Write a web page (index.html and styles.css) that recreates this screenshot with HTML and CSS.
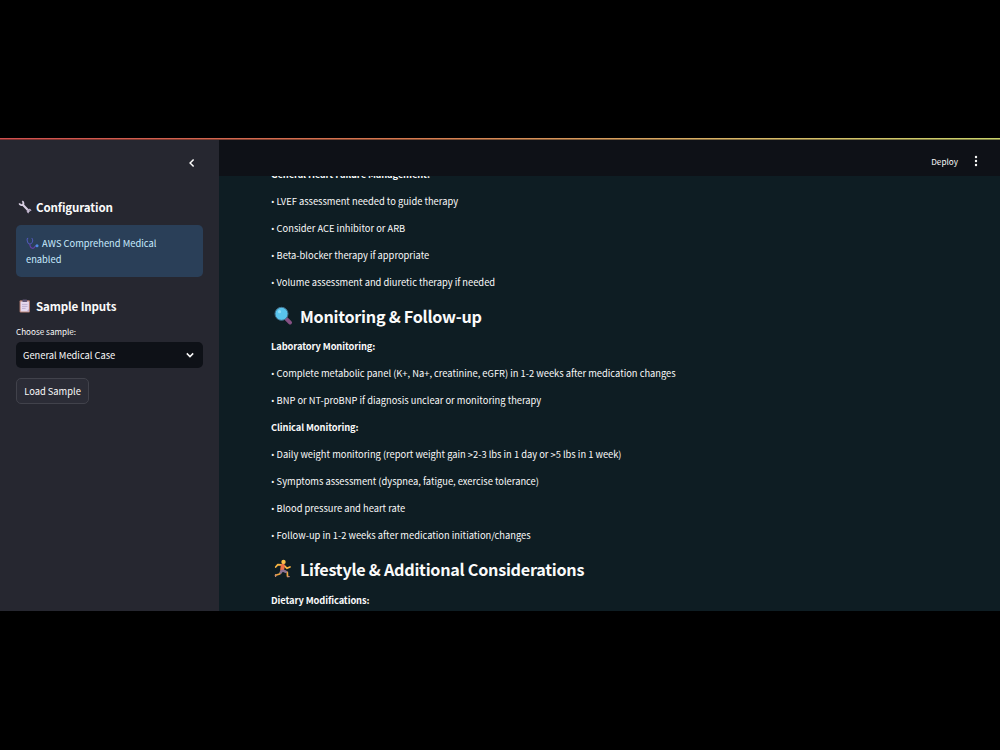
FILE: index.html
```
<!DOCTYPE html>
<html lang="en">
<head>
    <meta charset="UTF-8">
    <meta name="viewport" content="width=device-width, initial-scale=1.0">
    <title>Medical Assistant</title>
    <link rel="stylesheet" href="styles.css">
</head>
<body>
    <div class="app">
        <div class="decoration"></div>
        <aside class="sidebar">
            <div class="sidebar-header">
                <svg class="collapse" viewBox="0 0 10 10"><path d="M6.6 1.5 3.1 5l3.5 3.5"/></svg>
            </div>
            <h3>
                <svg class="icon" viewBox="0 0 14 14">
                    <path d="M4.6 4.6 10.8 11" stroke="#d8cfe2" stroke-width="2.1" stroke-linecap="round"/>
                    <path d="M1.3 3.4c.6 1.7 2.3 2.3 3.6 1.4 1-.9.9-2.6-.7-3.6" fill="none" stroke="#d8cfe2" stroke-width="1.7"/>
                    <path d="M9.4 11.8c-.2-1.6 1.2-2.8 2.9-2.2M10.7 12.9l-1.3-1.1M13 10.8l-.9-1.3" fill="none" stroke="#b9adc6" stroke-width="1.3"/>
                </svg>
                <span>Configuration</span>
            </h3>
            <div class="alert">
                <svg class="icon-small" viewBox="0 0 13 13">
                    <path d="M2.2 1.2C1 1.2 1 2.7 1.3 4c.4 2 1.3 3 2.5 3S6.6 5.5 6.7 3.5c0-1.4-.2-2.3-1.2-2.3" fill="none" stroke="#4f58b5" stroke-width="1.1"/>
                    <path d="M3.8 7c.2 3 1.2 4.3 3.2 4.3 2.2 0 1.5-2.8 3.5-2.8" fill="none" stroke="#6440a4" stroke-width="1.2"/>
                    <circle cx="11" cy="8.8" r="1.5" fill="#4d8be6"/>
                </svg>
                <span>AWS Comprehend Medical enabled</span>
            </div>
            <h3 class="samples-title">
                <svg class="icon" viewBox="0 0 14 14">
                    <rect x="1.6" y="1.2" width="10.3" height="12.3" rx="1" fill="#b98275"/>
                    <rect x="2.6" y="2.5" width="8.3" height="10" fill="#e6d9ee"/>
                    <rect x="4.4" y=".6" width="4.7" height="2.3" rx=".6" fill="#5f5573"/>
                    <path d="M4 5.4h5.5M4 7.4h5.5M4 9.4h3.6" stroke="#b5a6c9" stroke-width=".8"/>
                    <path d="m8.6 12.5 2.3-2.5v2.5z" fill="#b7a5c5"/>
                </svg>
                <span>Sample Inputs</span>
            </h3>
            <label class="field-label">Choose sample:</label>
            <div class="select">
                <span>General Medical Case</span>
                <svg class="chevron" viewBox="0 0 10 10"><path d="M1.8 3.4 5 6.6l3.2-3.2"/></svg>
            </div>
            <button class="load-btn">Load Sample</button>
        </aside>
        <main class="main">
            <header class="toolbar">
                <span class="deploy">Deploy</span>
                <svg class="dots" viewBox="0 0 4 12"><circle cx="2" cy="2" r="1.2"/><circle cx="2" cy="6" r="1.2"/><circle cx="2" cy="10" r="1.2"/></svg>
            </header>
            <div class="content">
                <p><strong>General Heart Failure Management:</strong></p>
                <p><span class="bullet">•</span> LVEF assessment needed to guide therapy</p>
                <p><span class="bullet">•</span> Consider ACE inhibitor or ARB</p>
                <p><span class="bullet">•</span> Beta-blocker therapy if appropriate</p>
                <p><span class="bullet">•</span> Volume assessment and diuretic therapy if needed</p>
                <h2>
                    <svg class="icon-large" viewBox="0 0 20 20">
                        <path d="m13.3 12.8 3.8 3.8" stroke="#865184" stroke-width="3.8" stroke-linecap="round"/>
                        <circle cx="8.5" cy="7.8" r="6.5" fill="#59c4ed" stroke="#42708c" stroke-width="1"/>
                        <circle cx="6.5" cy="5.7" r="1.6" fill="#8bdcf6"/>
                    </svg>
                    <span>Monitoring &amp; Follow-up</span>
                </h2>
                <p><strong>Laboratory Monitoring:</strong></p>
                <p><span class="bullet">•</span> Complete metabolic panel (K+, Na+, creatinine, eGFR) in 1-2 weeks after medication changes</p>
                <p><span class="bullet">•</span> BNP or NT-proBNP if diagnosis unclear or monitoring therapy</p>
                <p><strong>Clinical Monitoring:</strong></p>
                <p><span class="bullet">•</span> Daily weight monitoring (report weight gain &gt;2-3 lbs in 1 day or &gt;5 lbs in 1 week)</p>
                <p><span class="bullet">•</span> Symptoms assessment (dyspnea, fatigue, exercise tolerance)</p>
                <p><span class="bullet">•</span> Blood pressure and heart rate</p>
                <p><span class="bullet">•</span> Follow-up in 1-2 weeks after medication initiation/changes</p>
                <h2>
                    <svg class="icon-large" viewBox="0 0 20 20">
                        <g fill="none" stroke-linecap="round" stroke-linejoin="round">
                            <path d="M8.5 5.8 4.8 5.6 2.7 8M11.5 7l2.5 2.3 3-1.4" stroke="#f7b544" stroke-width="1.7"/>
                            <path d="M8.5 12.5 6.7 15l-4.2 1.3M11 12l3.3 1.3.2 4" stroke="#f0a63d" stroke-width="1.7"/>
                            <path d="m9.8 6.5-.6 4.3" stroke="#ed7046" stroke-width="4"/>
                            <path d="m8.7 12-1 1.5M10 11.7l3 1.2" stroke="#8c7192" stroke-width="2.5"/>
                            <path d="M2.6 15.6v1.8M14.5 17.6h1.7" stroke="#c78a78" stroke-width="1.3"/>
                        </g>
                        <circle cx="10.5" cy="2.9" r="2.2" fill="#fbc149"/>
                    </svg>
                    <span>Lifestyle &amp; Additional Considerations</span>
                </h2>
                <p><strong>Dietary Modifications:</strong></p>
            </div>
        </main>
    </div>
</body>
</html>
```
FILE: styles.css
```
* {
    box-sizing: border-box;
}
body {
    margin: 0;
    padding-top: 138px;
    height: 750px;
    background: #000;
    color: #fafafa;
    font-family: "Noto Sans CJK SC", "Open Sans", sans-serif;
    font-size: 9.33px;
    overflow: hidden;
}
.app {
    display: grid;
    grid-template-columns: 219px 1fr;
    grid-template-rows: 2px 471px;
    height: 473px;
    overflow: hidden;
}
.decoration {
    grid-column: 1 / 3;
    border-bottom: 1px solid rgba(0, 0, 0, 0.4);
    background: linear-gradient(to right, #d0504f, #d5784f 40%, #d8b768 75%, #c9d16b) border-box;
}
.sidebar {
    padding: 0 16px;
    background: #262730;
}
.sidebar-header {
    display: flex;
    justify-content: flex-end;
    padding: 17.5px 6px 0 0;
    height: 55.5px;
}
.collapse, .chevron {
    width: 10px;
    height: 10px;
    fill: none;
    stroke: #fafafa;
    stroke-width: 1.5;
}
h2, h3 {
    display: flex;
    align-items: center;
    margin: 0;
    font-weight: 600;
}
h3 {
    gap: 4px;
    height: 22px;
    padding-left: 2px;
    font-size: 11.6px;
    letter-spacing: -0.16px;
}
.icon {
    width: 14px;
    height: 14px;
    fill: none;
}
.alert {
    margin-top: 7.5px;
    height: 52px;
    padding: 10px 36px 0 10px;
    border-radius: 5px;
    background: #2a3f58;
    color: #c7ebff;
    line-height: 16px;
}
.icon-small {
    width: 13px;
    height: 13px;
    margin-right: 1px;
    vertical-align: -3px;
}
.samples-title {
    margin-top: 17.5px;
}
.field-label {
    display: block;
    margin-top: 7.5px;
    height: 18px;
    font-size: 8.15px;
    line-height: 15px;
}
.select {
    display: flex;
    align-items: center;
    justify-content: space-between;
    height: 26px;
    padding: 0 8px 0 7px;
    border-radius: 5px;
    background: #0e1117;
}
.load-btn {
    display: block;
    margin-top: 10px;
    width: 73px;
    height: 26px;
    padding: 0;
    border: 1px solid #41424b;
    border-radius: 5px;
    background: #2b2c36;
    color: #fafafa;
    font: inherit;
}
.main {
    background: #0e1d23;
    overflow: hidden;
}
/* stays above the scrolled content */
.toolbar {
    position: relative;
    display: flex;
    align-items: center;
    justify-content: flex-end;
    gap: 16px;
    height: 36px;
    padding: 6px 22px 0 0;
    background: #0e1117;
    font-size: 8.2px;
}
.deploy {
    padding-bottom: 1px;
}
.dots {
    width: 4px;
    height: 12px;
    fill: #fafafa;
}
.content {
    margin-top: -10px;
    padding-left: 52px;
    white-space: nowrap;
}
p {
    margin: 0 0 10px;
    line-height: 17px;
}
strong {
    font-weight: 600;
    letter-spacing: -0.12px;
}
.bullet {
    display: inline-block;
    width: 3.5px;
    font-family: "Open Sans", sans-serif;
    line-height: 1;
}
h2 {
    gap: 6px;
    height: 24px;
    margin: 13px 0 10.4px;
    padding-left: 3px;
    font-size: 16.2px;
    letter-spacing: -0.26px;
}
.icon-large {
    width: 20px;
    height: 20px;
    margin: 0 1px 0 -1px;
}
```
